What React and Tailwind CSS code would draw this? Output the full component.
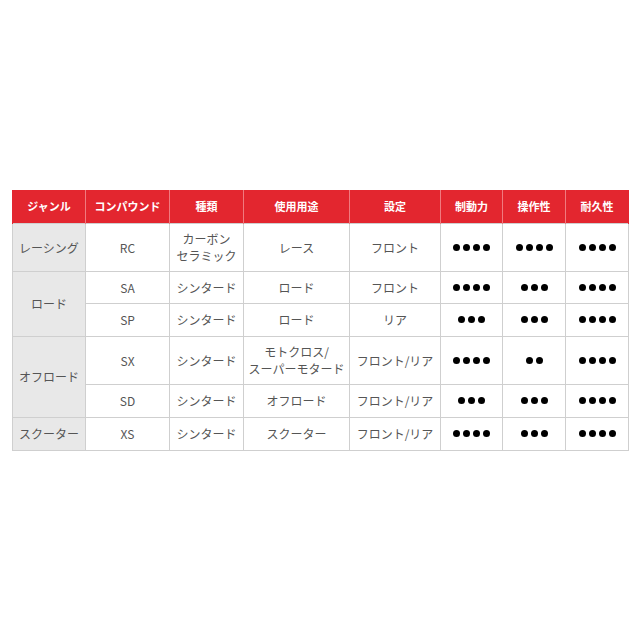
import React from 'react'

const rows = [
  { genre: 'レーシング', span: 1, code: 'RC', type: ['カーボン', 'セラミック'], use: ['レース'], pos: 'フロント', a: 4, b: 4, c: 4, h: 'h-[48px]' },
  { genre: 'ロード', span: 2, code: 'SA', type: ['シンタード'], use: ['ロード'], pos: 'フロント', a: 4, b: 3, c: 4, h: 'h-[32px]' },
  { code: 'SP', type: ['シンタード'], use: ['ロード'], pos: 'リア', a: 3, b: 3, c: 4, h: 'h-[33px]' },
  { genre: 'オフロード', span: 2, code: 'SX', type: ['シンタード'], use: ['モトクロス/', 'スーパーモタード'], pos: 'フロント/リア', a: 4, b: 2, c: 4, h: 'h-[48px]' },
  { code: 'SD', type: ['シンタード'], use: ['オフロード'], pos: 'フロント/リア', a: 3, b: 3, c: 4, h: 'h-[33px]' },
  { genre: 'スクーター', span: 1, code: 'XS', type: ['シンタード'], use: ['スクーター'], pos: 'フロント/リア', a: 4, b: 3, c: 4, h: 'h-[33px]' },
]

const heads = [
  ['ジャンル', 'w-[73px]'],
  ['コンパウンド', 'w-[84px]'],
  ['種類', 'w-[74px]'],
  ['使用用途', 'w-[106px]'],
  ['設定', 'w-[91px]'],
  ['制動力', 'w-[62px]'],
  ['操作性', 'w-[63px]'],
  ['耐久性', 'w-[63px]'],
]

function Dots({ n }) {
  return (
    <div className="flex justify-center gap-[3px]">
      {Array.from({ length: n }).map((_, i) => (
        <span key={i} className="block w-[7px] h-[7px] rounded-full bg-black" />
      ))}
    </div>
  )
}

const cell = 'border border-[#cfcfcf] text-center align-middle p-0'

export default function App() {
  return (
    <div className="w-[640px] h-[640px] bg-white pt-[190px] pl-[12px] text-[#555] text-[12px] leading-[17px]" style={{ fontFamily: '"Noto Sans CJK JP", "Noto Sans", sans-serif' }}>
      <table className="border-collapse table-fixed w-[616px]">
        <thead>
          <tr className="h-[33px] bg-[#e3262f] text-white font-bold text-[11px]">
            {heads.map(([t, w]) => (
              <th key={t} className={`${w} border-x border-[#f07a7f] first:border-l-[#e3262f] last:border-r-[#e3262f] text-center font-bold`}>{t}</th>
            ))}
          </tr>
        </thead>
        <tbody>
          {rows.map((r) => (
            <tr key={r.code} className={r.h}>
              {r.genre && (
                <td rowSpan={r.span} className={`${cell} bg-[#e8e8e8]`}>{r.genre}</td>
              )}
              <td className={cell}>{r.code}</td>
              <td className={cell}>{r.type.map((t) => <div key={t}>{t}</div>)}</td>
              <td className={cell}>{r.use.map((t) => <div key={t}>{t}</div>)}</td>
              <td className={cell}>{r.pos}</td>
              <td className={cell}><Dots n={r.a} /></td>
              <td className={cell}><Dots n={r.b} /></td>
              <td className={cell}><Dots n={r.c} /></td>
            </tr>
          ))}
        </tbody>
      </table>
    </div>
  )
}
